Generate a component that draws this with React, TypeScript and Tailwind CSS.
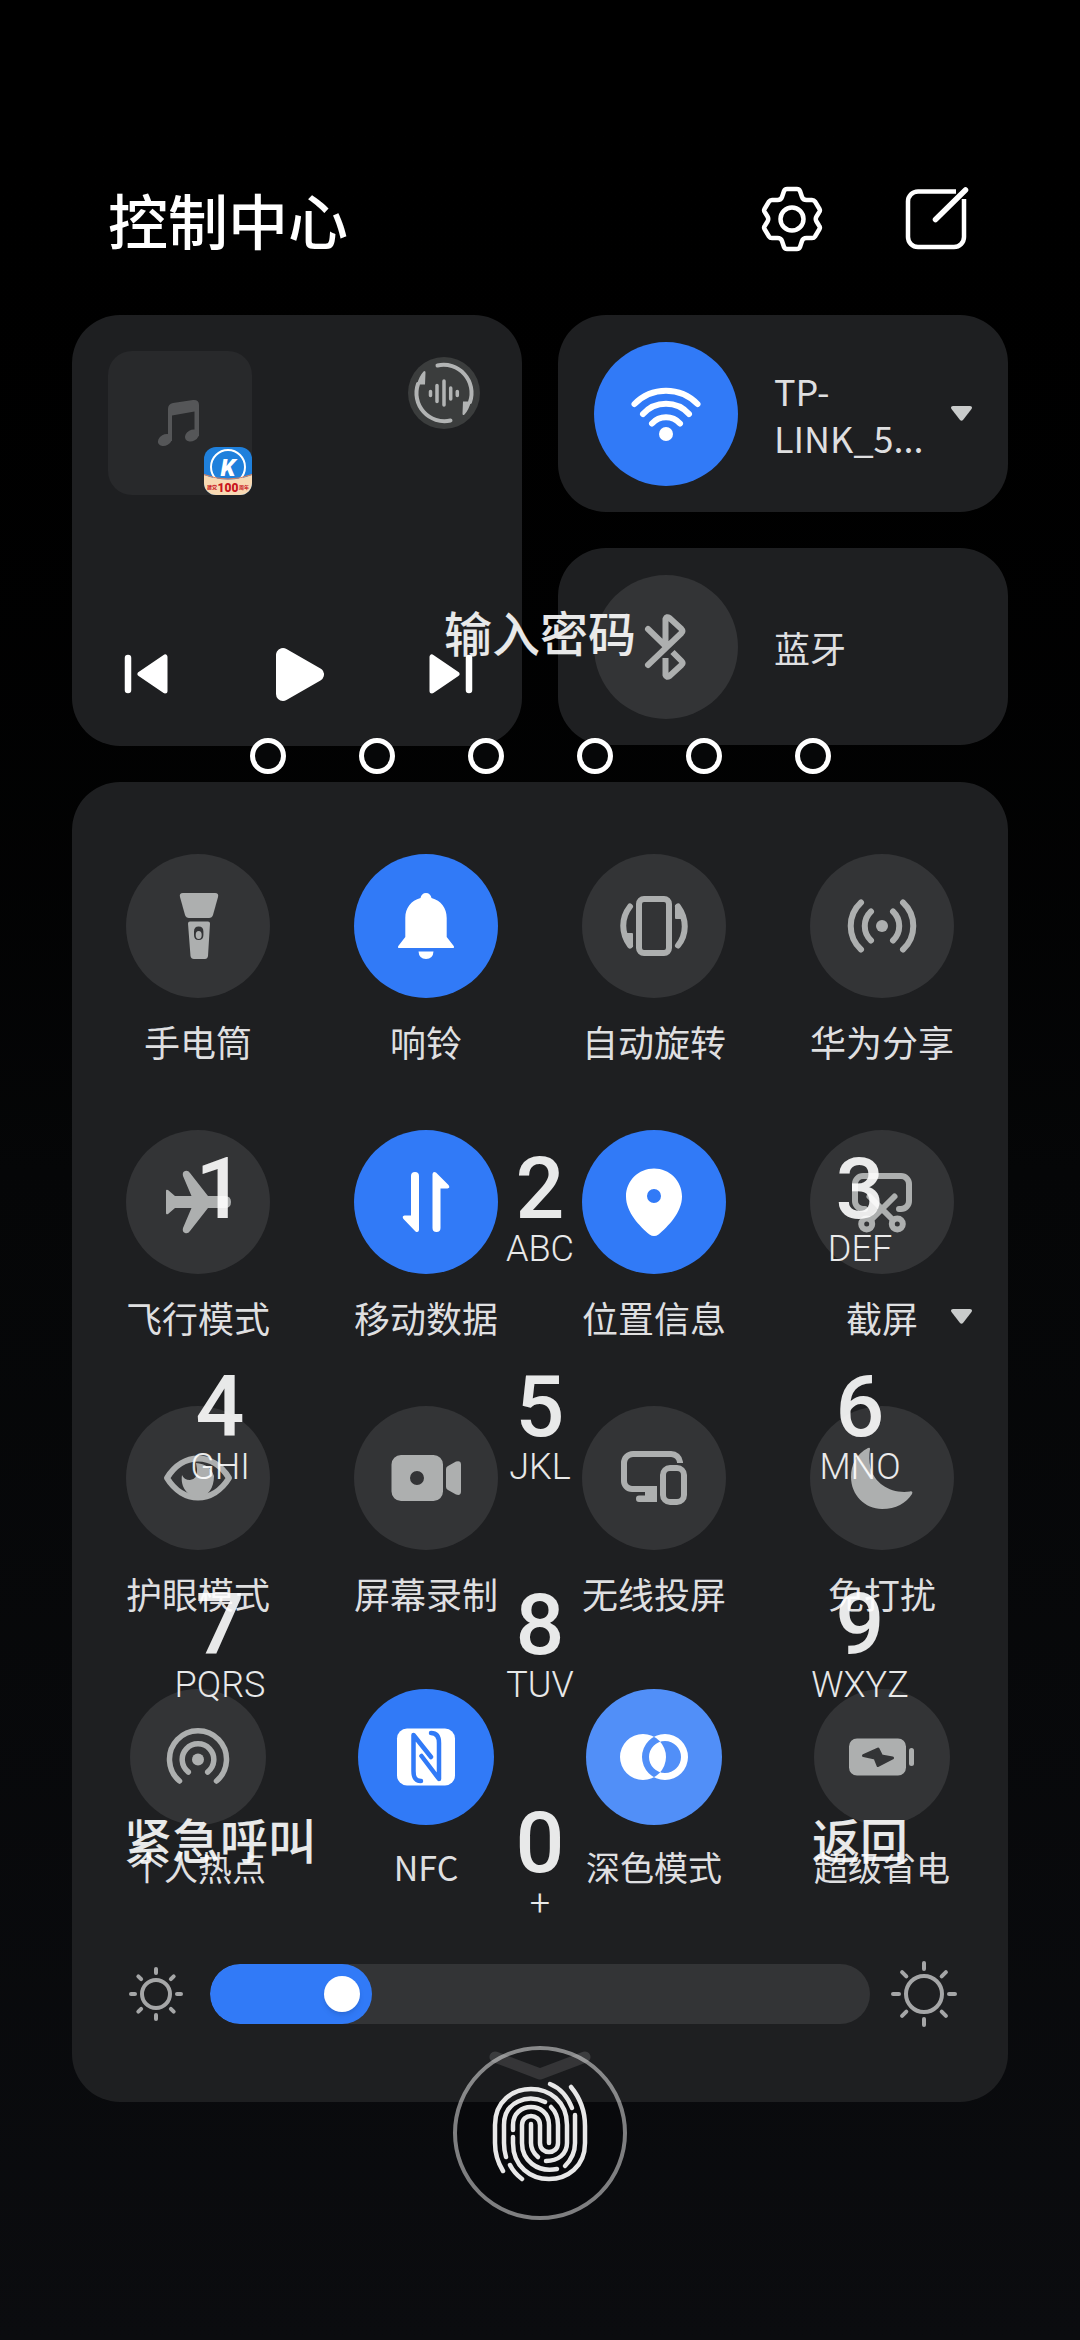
import { useState, type ReactNode } from 'react';
import clsx from 'clsx';

type Tile = {
  label: string;
  icon: ReactNode;
  on?: boolean;
  pressed?: boolean;
  more?: boolean;
};

function Icon({ children, className = 'size-18' }: { children: ReactNode; className?: string }) {
  return (
    <svg viewBox="0 0 72 72" className={className} fill="none" strokeLinecap="round" strokeLinejoin="round" aria-hidden="true">
      {children}
    </svg>
  );
}

function Caret() {
  return (
    <svg viewBox="0 0 21 15" className="h-[15px] w-[21px] shrink-0" aria-hidden="true">
      <path d="M2 0h17q3 .5 1.500 3l-8.500 11q-1.500 1.500-3 0L.5 3Q-1 .5 2 0z" fill="#c9cbcb" />
    </svg>
  );
}

const FlashlightIcon = () => (
  <Icon>
    <path d="M21 3h32q4 0 3 4l-5 18q-1 3-4 3H27q-3 0-4-3L18 7q-1-4 3-4z" fill="currentColor" />
    <path fillRule="evenodd" d="M28 31.500h18q2 0 2 2L46 66q-.5 3-3 3H32q-3 0-3.500-3L26 33.500q0-2 2-2zM36.700 36.500q-4.700 0-4.700 5v3.500q0 5 4.700 5t4.700-5v-3.500q0-5-4.700-5z" fill="currentColor" />
    <ellipse cx="36.700" cy="45" rx="3" ry="4" fill="currentColor" />
  </Icon>
);

const BellIcon = () => (
  <Icon>
    <path d="M36 3c3 0 5 2 5.500 5C51 10.500 56.700 18 56.700 28v19l7 9q1 2-1 2H9.300q-2 0-1-2l7-9V28c0-10 5.700-17.500 15.200-20C31 5 33 3 36 3z" fill="currentColor" />
    <path d="M28.500 61.500h15q-.5 7.500-7.500 7.500t-7.500-7.500z" fill="currentColor" />
  </Icon>
);

const RotateIcon = () => (
  <Icon>
    <rect x="21" y="9" width="30" height="54" rx="5" stroke="currentColor" strokeWidth="6" />
    <path d="M12 16.500C3 28 3 43 12 55.500" stroke="currentColor" strokeWidth="6" />
    <path d="M6 43h8q1 0 1 1v13h-4z" fill="currentColor" />
    <path d="M60 55.500C69 44 69 29 60 16.500" stroke="currentColor" strokeWidth="6" />
    <path d="M66 29h-8q-1 0-1-1V15h4z" fill="currentColor" />
  </Icon>
);

const ShareIcon = () => (
  <Icon>
    <circle cx="36" cy="36" r="6" fill="currentColor" />
    <g stroke="currentColor" strokeWidth="6">
      <path d="M25 21.500a20 20 0 0 0 0 29M15 12.500a32 32 0 0 0 0 47M47 21.500a20 20 0 0 1 0 29M57 12.500a32 32 0 0 1 0 47" />
    </g>
  </Icon>
);

const PlaneIcon = () => (
  <Icon>
    <path d="M4 25q0-2 2-1l7 6h16.500L21 10q-1-4 2-5t5 2l18 23h17q6 0 6 6t-6 6H46L28 65q-2 3-5 2t-2-5l8.500-20H13l-7 6q-2 1-2-1z" fill="currentColor" />
  </Icon>
);

const DataIcon = () => (
  <Icon>
    <path d="M21 10q0-4 4-4t4 4v54q-.5 3-3.500 1.500L13.500 53q-2-3 1-3.500H21z" fill="currentColor" />
    <path d="M50.500 62q0 4-4 4t-4-4V8q.5-3 3.500-1.500L58.500 19q2 3-1 3.500h-7z" fill="currentColor" />
  </Icon>
);

const PinIcon = () => (
  <Icon>
    <path fillRule="evenodd" d="M36 2.500C20.500 2.500 8 14.800 8 30.500c0 16 14 30 23.500 38q4.500 3 9 0C50 60.500 64 46.500 64 30.500 64 14.800 51.500 2.500 36 2.500zM36 23a7 7 0 1 1 0 14 7 7 0 0 1 0-14z" fill="currentColor" />
  </Icon>
);

const ScissorsIcon = () => (
  <Icon>
    <g stroke="currentColor" strokeWidth="6">
      <path d="M19 43h-2a8 8 0 0 1-8-8V18a8 8 0 0 1 8-8h38a8 8 0 0 1 8 8v17a8 8 0 0 1-8 8h-2" />
      <path d="M48.500 30.500L26 53M23.500 30.500L46 53" />
      <circle cx="20.700" cy="58" r="5.500" />
      <circle cx="51.300" cy="58" r="5.500" />
    </g>
  </Icon>
);

const EyeIcon = () => (
  <Icon>
    <path d="M5 36C21 10 51 10 67 36 51 62 21 62 5 36z" stroke="currentColor" strokeWidth="6" />
    <path d="M20 33q2 5 8 5 8-1 7-11l-1-6q14 1 18 13c0 12-6 21-16 21S18 45 20 33z" fill="currentColor" />
  </Icon>
);

const RecordIcon = () => (
  <Icon>
    <path fillRule="evenodd" d="M11 13h32.500a9.500 9.500 0 0 1 9.500 9.500v27a9.500 9.500 0 0 1-9.500 9.500H11a9.500 9.500 0 0 1-9.500-9.500v-27A9.500 9.500 0 0 1 11 13zM27 29a7 7 0 1 0 0 14 7 7 0 0 0 0-14z" fill="currentColor" />
    <path d="M56 27q0-2 2-3l8-4.500q5-1.500 5 3v27q0 4.500-5 3L58 48q-2-1-2-3z" fill="currentColor" />
  </Icon>
);

const ScreencastIcon = () => (
  <Icon>
    <path d="M62 21v-1a9 9 0 0 0-9-8H15a9 9 0 0 0-9 9v18a8 8 0 0 0 8 8h22" stroke="currentColor" strokeWidth="6" strokeLinecap="butt" />
    <path d="M27 44h12v16H21q-3 0-3-3.300t3-3.300h6z" fill="currentColor" />
    <rect x="45" y="26" width="21" height="34" rx="7" stroke="currentColor" strokeWidth="6" />
  </Icon>
);

const MoonIcon = () => (
  <Icon>
    <path d="M22 6C10 12 5 23 5 35c0 18 14 32 31 32 14 0 24-6 30-15 1-2 0-3-2-2.500C45 52 29 42 24.500 26 23 19 23 13 24 7q0-2-2-1z" fill="currentColor" />
  </Icon>
);

const HotspotIcon = () => (
  <Icon>
    <circle cx="36" cy="38.500" r="6" fill="currentColor" />
    <path d="M17.500 60a28.500 28.500 0 1 1 37 0M26.300 51a15.800 15.800 0 1 1 19.400 0" stroke="currentColor" strokeWidth="5.500" />
  </Icon>
);

const NfcIcon = () => (
  <Icon>
    <rect x="7" y="7.500" width="58" height="57" rx="10" fill="currentColor" />
    <g stroke="#317af7" strokeWidth="4.500">
      <path d="M31 60c-6 0-7.500-4-7.500-10V14L41 36" />
      <path d="M41 12c6 0 8 4 8 10v36L31.500 35" />
    </g>
  </Icon>
);

const DarkModeIcon = () => (
  <Icon>
    <path
      fillRule="evenodd"
      d="M25 13a23 23 0 1 1 0 46 23 23 0 0 1 0-46zM47 13a23 23 0 1 1 0 46 23 23 0 0 1 0-46zM47 20a16 16 0 1 1 0 32 16 16 0 0 1 0-32z"
      fill="currentColor"
    />
  </Icon>
);

const BatteryIcon = () => (
  <Icon>
    <path d="M11 17.500h41a8 8 0 0 1 8 8v21a8 8 0 0 1-8 8H11a8 8 0 0 1-8-8v-21a8 8 0 0 1 8-8z" fill="currentColor" />
    <path d="M17.500 34.500L32 28l3.500 7 11 2L32 44.500 29 37z" fill="#333436" stroke="#333436" strokeWidth="3" />
    <path d="M65.500 29.500v13" stroke="currentColor" strokeWidth="5" />
  </Icon>
);

const WifiIcon = () => (
  <Icon>
    <path d="M4.500 26a44 44 0 0 1 63 0M13 36a31 31 0 0 1 46 0M22 45.500a19 19 0 0 1 28 0" stroke="currentColor" strokeWidth="6" />
    <circle cx="36" cy="56" r="7" fill="currentColor" />
  </Icon>
);

const BluetoothIcon = () => (
  <Icon>
    <path d="M18 18l17.500 17V8q1-3 4-1l12 11q2 2 0 4L18 54" stroke="currentColor" strokeWidth="6" />
    <path d="M35.500 47v17q1 3 4 1l12-11q2-2 0-4l-9-9" stroke="currentColor" strokeWidth="6" strokeLinecap="butt" />
  </Icon>
);

const tiles: Tile[] = [
  { label: '手电筒', icon: <FlashlightIcon /> },
  { label: '响铃', icon: <BellIcon />, on: true },
  { label: '自动旋转', icon: <RotateIcon /> },
  { label: '华为分享', icon: <ShareIcon /> },
  { label: '飞行模式', icon: <PlaneIcon /> },
  { label: '移动数据', icon: <DataIcon />, on: true },
  { label: '位置信息', icon: <PinIcon />, on: true },
  { label: '截屏', icon: <ScissorsIcon />, more: true },
  { label: '护眼模式', icon: <EyeIcon /> },
  { label: '屏幕录制', icon: <RecordIcon /> },
  { label: '无线投屏', icon: <ScreencastIcon /> },
  { label: '免打扰', icon: <MoonIcon /> },
];

const lastRow: Tile[] = [
  { label: '个人热点', icon: <HotspotIcon /> },
  { label: 'NFC', icon: <NfcIcon />, on: true },
  { label: '深色模式', icon: <DarkModeIcon />, pressed: true },
  { label: '超级省电', icon: <BatteryIcon /> },
];

const keys = [
  ['1', ''],
  ['2', 'ABC'],
  ['3', 'DEF'],
  ['4', 'GHI'],
  ['5', 'JKL'],
  ['6', 'MNO'],
  ['7', 'PQRS'],
  ['8', 'TUV'],
  ['9', 'WXYZ'],
];

function TileButton({ tile, small }: { tile: Tile; small?: boolean }) {
  return (
    <button type="button" className="relative flex flex-col items-center">
      <span
        className={clsx(
          'flex items-center justify-center rounded-full',
          small ? 'size-34' : 'size-36',
          tile.on && 'bg-[#317af7] text-white',
          tile.pressed && 'bg-[#518ff8] text-white',
          !tile.on && !tile.pressed && 'bg-[#333436] text-[#adafaf]',
        )}
      >
        {tile.icon}
      </span>
      <span className={clsx('mt-5 text-[#dfdfe0]', small ? 'text-[34px] leading-[44px]' : 'text-4xl leading-[46px]')}>
        {tile.label}
      </span>
      {tile.more && (
        <span className="absolute right-6 bottom-4">
          <Caret />
        </span>
      )}
    </button>
  );
}

function Sun({ large }: { large?: boolean }) {
  const r = large ? 18 : 14;
  const from = large ? 25 : 21;
  const to = large ? 31 : 25;
  return (
    <svg viewBox="0 0 66 66" className="size-[66px] shrink-0" fill="none" stroke="#a5a6a7" strokeWidth="4" strokeLinecap="round" aria-hidden="true">
      <circle cx="33" cy="33" r={r} />
      {[0, 45, 90, 135, 180, 225, 270, 315].map((a) => (
        <path key={a} d={`M33 ${33 - from}V${33 - to}`} transform={`rotate(${a} 33 33)`} />
      ))}
    </svg>
  );
}

function Brightness() {
  const [value, setValue] = useState(17);
  return (
    <div className="mt-18 flex items-center gap-[21px] px-[51px]">
      <Sun />
      <div className="relative h-15 flex-1 overflow-hidden rounded-full bg-[#333436]">
        <div className="h-full rounded-full bg-[#317af7]" style={{ width: `calc(60px + (100% - 60px) * ${value / 100})` }} />
        <input
          type="range"
          aria-label="亮度"
          min={0}
          max={100}
          value={value}
          onChange={(e) => setValue(Number(e.target.value))}
          className="absolute inset-x-3 inset-y-0 appearance-none bg-transparent [&::-webkit-slider-thumb]:size-9 [&::-webkit-slider-thumb]:appearance-none [&::-webkit-slider-thumb]:rounded-full [&::-webkit-slider-thumb]:bg-white [&::-webkit-slider-thumb]:shadow-md"
        />
      </div>
      <Sun large />
    </div>
  );
}

function MediaCard() {
  return (
    <section className="flex min-h-[431px] flex-col justify-between rounded-[48px] bg-[#1e1f21] p-9">
      <div className="flex items-start justify-between">
        <div className="relative flex size-36 items-center justify-center rounded-3xl bg-[#28292b] text-[#555658]">
          <Icon>
            <path d="M24 49V22q0-5 5-6l20-3q6-.5 6 5v31h-4.500V24.500L28 28.500V54h-4z" fill="currentColor" />
            <ellipse cx="21" cy="53" rx="7.500" ry="5.500" transform="rotate(-30 21 53)" fill="currentColor" />
            <ellipse cx="48" cy="48.500" rx="7.500" ry="5.500" transform="rotate(-30 48 48.500)" fill="currentColor" />
          </Icon>
          <svg viewBox="0 0 48 48" className="absolute right-0 bottom-0 size-12 rounded-xl" aria-hidden="true">
            <rect width="48" height="48" fill="#1f80dc" />
            <circle cx="24" cy="20" r="17" fill="none" stroke="#fff" strokeWidth="2" />
            <text x="24" y="29" textAnchor="middle" fontSize="24" fontWeight="900" fontStyle="italic" fill="#fff" fontFamily="Roboto, sans-serif">K</text>
            <path d="M0 28q24 9 48 0v20H0z" fill="#f8d9b3" />
            <path d="M0 27.500q24 9 48 0" fill="none" stroke="#e0805a" strokeWidth="1" />
            <text x="24" y="45" textAnchor="middle" fontSize="12" fontWeight="900" fill="#c8141c" fontFamily="Roboto, sans-serif">100</text>
            <text x="3" y="42" fontSize="5" fontWeight="700" fill="#c8141c" fontFamily="Noto Sans CJK SC, sans-serif">建党</text>
            <text x="35" y="42" fontSize="5" fontWeight="700" fill="#c8141c" fontFamily="Noto Sans CJK SC, sans-serif">周年</text>
          </svg>
        </div>
        <button type="button" aria-label="音频输出" className="m-1.5 rounded-full bg-[#3b3d3d] text-[#b2b4b4]">
          <Icon>
            <path d="M29.500 8.500A28 28 0 0 1 62 45M42.500 63.500A28 28 0 0 1 10 27" stroke="currentColor" strokeWidth="4" />
            <path d="M55 44.500h8q-2 8-6.500 13-2 1.500-2-1zM17 27.500H9q2-8 6.500-13 2-1.500 2 1z" fill="currentColor" />
            <path d="M22.500 34.500v4M29 28.500v16M36 24v24M42.700 31v11M49.300 34.500v4" stroke="currentColor" strokeWidth="3.500" />
          </Icon>
        </button>
      </div>
      <div className="flex items-center justify-between text-white">
        <button type="button" aria-label="上一首">
          <Icon>
            <path d="M20 20v32" stroke="currentColor" strokeWidth="6.500" />
            <path d="M32 36l25-17v34z" fill="currentColor" stroke="currentColor" strokeWidth="5" />
          </Icon>
        </button>
        <button type="button" aria-label="播放">
          <Icon>
            <path d="M22 17v39l34-19.500z" fill="currentColor" stroke="currentColor" strokeWidth="14" />
          </Icon>
        </button>
        <button type="button" aria-label="下一首">
          <Icon>
            <path d="M55 20v32" stroke="currentColor" strokeWidth="6.500" />
            <path d="M43 36L18 19v34z" fill="currentColor" stroke="currentColor" strokeWidth="5" />
          </Icon>
        </button>
      </div>
    </section>
  );
}

function ControlCenter() {
  return (
    <main className="px-18 font-['Noto_Sans_CJK_SC',sans-serif]">
      <header className="flex items-center justify-between px-9 pt-[183px] text-white">
        <h1 className="text-6xl leading-[72px] font-medium">控制中心</h1>
        <div className="flex gap-18">
          <button type="button" aria-label="设置">
            <Icon>
              <path
                d="M31 6h10q2 0 3 2l2 6q1 3 4.500 3h5.500q2 0 3 1.500l4.500 7.500q1 2-.5 3.500l-2.500 4q-1.500 2.500 0 5l2.500 4q1.500 1.500.5 3.500l-4.500 7.500q-1 1.500-3 1.500h-5.500q-3.500 0-4.500 3l-2 6q-1 2-3 2h-10q-2 0-3-2l-2-6q-1-3-4.500-3h-5.500q-2 0-3-1.500l-4.500-7.500q-1-2 .5-3.500l2.500-4q1.500-2.500 0-5l-2.500-4q-1.500-1.500-.5-3.500l4.500-7.500q1-1.500 3-1.500h5.500q3.500 0 4.500-3l2-6q1-2 3-2z"
                stroke="currentColor"
                strokeWidth="4.500"
              />
              <circle cx="36" cy="36" r="11.500" stroke="currentColor" strokeWidth="4.500" />
            </Icon>
          </button>
          <button type="button" aria-label="编辑">
            <Icon>
              <path d="M56 8.500H18a10 10 0 0 0-10 10V54a10 10 0 0 0 10 10h36a10 10 0 0 0 10-10V16" stroke="currentColor" strokeWidth="4.500" strokeLinecap="butt" />
              <path d="M35.500 36.500L65.500 7" stroke="currentColor" strokeWidth="5.500" />
            </Icon>
          </button>
        </div>
      </header>

      <div className="mt-15 grid grid-cols-2 gap-9">
        <MediaCard />
        <div className="flex flex-col gap-9">
          <section className="flex min-h-[197px] items-center gap-9 rounded-[48px] bg-[#1e1f21] px-9">
            <button type="button" aria-label="WLAN" className="flex size-36 shrink-0 items-center justify-center rounded-full bg-[#317af7] text-white">
              <WifiIcon />
            </button>
            <div className="flex min-w-0 flex-1 items-center justify-between">
              <p className="min-w-0 text-4xl leading-[47px] text-[#dfdfe0]">TP-LINK_5...</p>
              <Caret />
            </div>
          </section>
          <section className="flex min-h-[197px] items-center gap-9 rounded-[48px] bg-[#1e1f21] px-9">
            <button type="button" aria-label="蓝牙" className="flex size-36 shrink-0 items-center justify-center rounded-full bg-[#333436] text-[#adafaf]">
              <BluetoothIcon />
            </button>
            <p className="text-4xl leading-[46px] text-[#dfdfe0]">蓝牙</p>
          </section>
        </div>
      </div>

      <section className="mt-9 rounded-[48px] bg-[#1e1f21] pt-18 pb-[22px]">
        <div className="grid grid-cols-4 gap-y-[66px] px-3">
          {tiles.map((tile) => (
            <TileButton key={tile.label} tile={tile} />
          ))}
        </div>
        <div className="mt-[73px] grid grid-cols-4 px-3">
          {lastRow.map((tile) => (
            <TileButton key={tile.label} tile={tile} small />
          ))}
        </div>
        <Brightness />
        <button type="button" aria-label="收起" className="mx-auto mt-6 block">
          <svg viewBox="0 0 102 29" className="h-[29px] w-[102px]" fill="none" stroke="#3b3c3e" strokeWidth="11" strokeLinecap="round" strokeLinejoin="round">
            <path d="M6 6l45 17L96 6" />
          </svg>
        </button>
      </section>
    </main>
  );
}

function Fingerprint() {
  return (
    <svg viewBox="0 0 174 174" className="size-[174px]" fill="none" strokeLinecap="round" aria-hidden="true">
      <circle cx="87" cy="87" r="85" fill="#000" fillOpacity=".1" stroke="#fff" strokeOpacity=".48" strokeWidth="4" />
      <g stroke="#e8e8e8" strokeWidth="4.500">
        <path d="M50 125q-8-13-8-28V79c0-48 72-48 72 0v18c0 11-9 18-21 18" />
        <path d="M53 111q-2-7-2-14V79c0-24 24-31 41-23" />
        <path d="M60 84v-5c0-24 36-24 36 0v18" />
        <path d="M78 78v19q0 8 7 14" />
        <path d="M104 123c-20 4-35-9-35-26V79c0-12 18-12 18 0v18c0 12 18 12 18 0V79q0-11-7-18" />
        <path d="M60 91v6c0 48 72 48 72 0V80q0-22-14-39" />
        <path d="M122 69v28q0 13-10 23" />
        <path d="M97 38q15 6 22 24" />
        <path d="M57 119q4 8 12 14" />
      </g>
    </svg>
  );
}

// Passcode layer of the lock screen, shown through the shade
function Passcode() {
  return (
    <section className="absolute inset-0 flex flex-col font-[Roboto,'Noto_Sans_CJK_SC',sans-serif] text-white/90" aria-label="输入密码">
      <h2 className="mt-[606px] text-center text-5xl leading-[60px] font-medium">输入密码</h2>
      <div className="mt-18 flex justify-center gap-[73px]">
        {[0, 1, 2, 3, 4, 5].map((i) => (
          <span key={i} className="size-9 rounded-full border-[5px] border-white bg-[#060708]" />
        ))}
      </div>
      <div className="mt-[379px] grid grid-cols-3 gap-y-[98px] px-15">
        {keys.map(([digit, letters]) => (
          <button key={digit} type="button" className="flex flex-col items-center">
            <span className="text-[86px] leading-[72px] font-medium">{digit}</span>
            <span className="min-h-12 text-4xl leading-[48px] font-light">{letters}</span>
          </button>
        ))}
        <button type="button" className="self-start text-center text-5xl leading-[72px] font-medium">紧急呼叫</button>
        <button type="button" className="flex flex-col items-center">
          <span className="text-[86px] leading-[72px] font-medium">0</span>
          <span className="text-4xl leading-[48px] font-light">+</span>
        </button>
        <button type="button" className="self-start text-center text-5xl leading-[72px] font-medium">返回</button>
      </div>
      <button type="button" aria-label="指纹解锁" className="mx-auto mt-[119px] block rounded-full">
        <Fingerprint />
      </button>
    </section>
  );
}

export default function App() {
  return (
    <div className="relative min-h-screen bg-linear-to-b from-black via-[#050607] to-[#0b0c0f]">
      <ControlCenter />
      <Passcode />
    </div>
  );
}
